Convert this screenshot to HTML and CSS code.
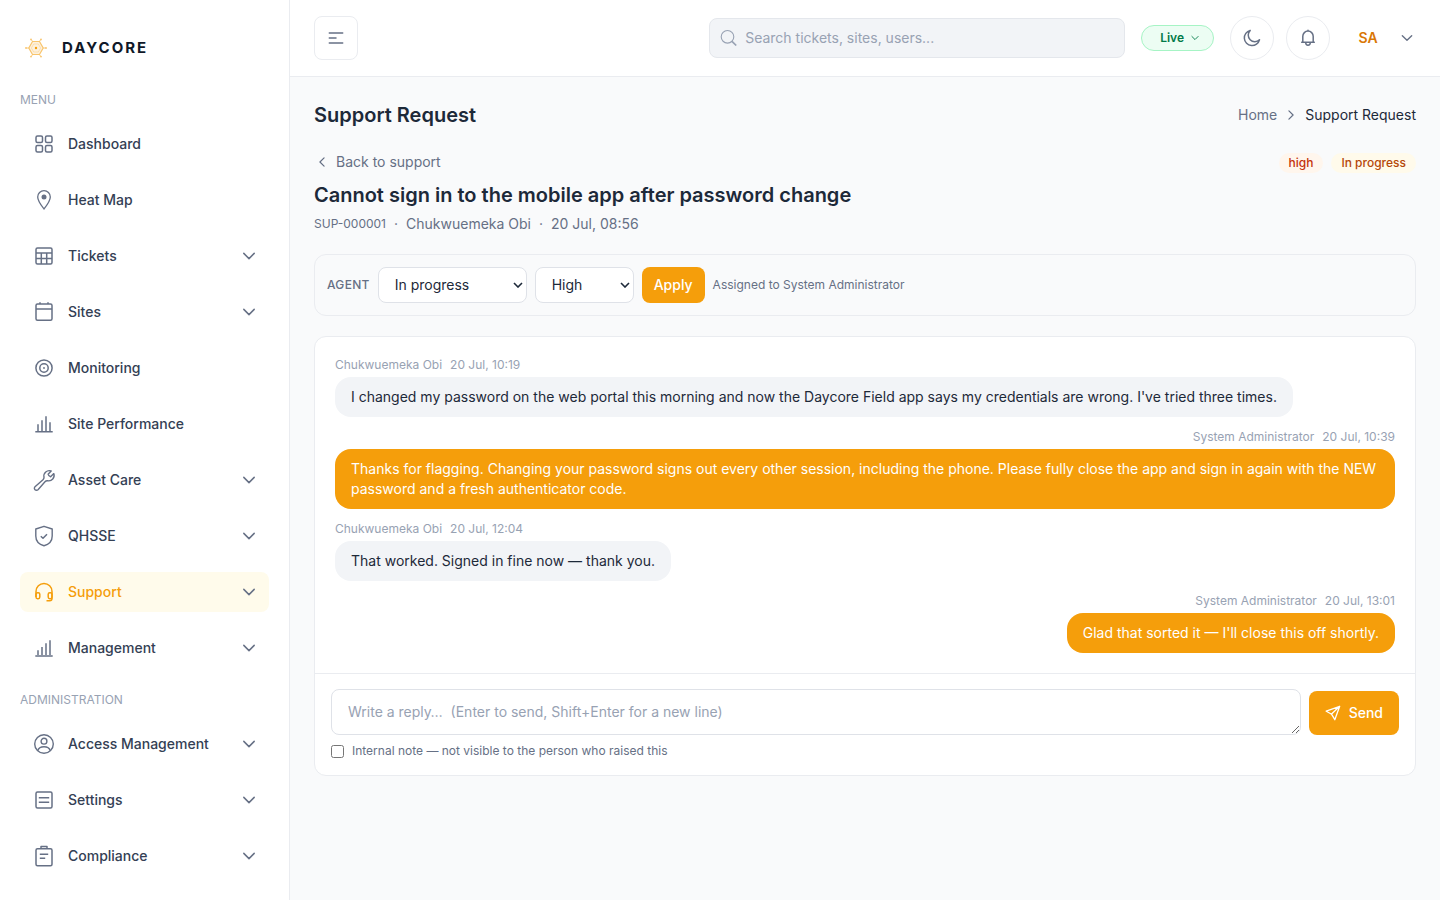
FILE: index.html
```html
<!DOCTYPE html>
<html lang="en">
<head>
    <meta charset="UTF-8">
    <meta name="viewport" content="width=device-width, initial-scale=1.0">
    <title>Support Request | Daycore</title>
    <link rel="stylesheet" href="styles.css">
</head>
<body>
    <svg class="sprite" aria-hidden="true">
        <symbol id="chevron" viewBox="0 0 20 20">
            <path d="M4.8 7.4 10 12.6l5.2-5.2" fill="none" stroke="currentColor" stroke-width="1.5" stroke-linecap="round" stroke-linejoin="round"/>
        </symbol>
    </svg>

    <div class="layout">
        <aside class="sidebar">
            <a class="logo" href="#">
                <svg class="logo-mark" viewBox="0 0 32 32" fill="none" stroke="#f59e0b">
                    <g opacity="0.6">
                        <path d="M12.500 9.500h7l3.700 6.500-3.700 6.500h-7L8.800 16z" stroke-width="1.200" fill="#fde8c8"/>
                        <path d="M13.700 12h4.600l2.300 4-2.300 4h-4.600l-2.300-4z" stroke-width="0.400"/>
                        <path d="M12.500 9.500 11.300 7.500M19.500 9.500l1.200-2M23.200 16h2.500M8.800 16H6.300M12.500 22.500l-1.200 2M19.500 22.500l1.200 2" stroke-width="0.900"/>
                        <g fill="#f59e0b" stroke="none">
                            <circle cx="11" cy="7.400" r="0.900"/>
                            <circle cx="21" cy="7.400" r="0.900"/>
                            <circle cx="26" cy="16" r="0.900"/>
                            <circle cx="6" cy="16" r="0.900"/>
                            <circle cx="11" cy="24.600" r="0.900"/>
                            <circle cx="21" cy="24.600" r="0.900"/>
                        </g>
                    </g>
                    <circle cx="16" cy="16" r="1.200" fill="#f59e0b" stroke="none"/>
                </svg>
                <span class="logo-text">DAYCORE</span>
            </a>

            <nav class="menu">
                <section class="menu-group">
                    <h2 class="menu-title">MENU</h2>
                    <ul class="menu-list">
                        <li><a class="menu-item" href="#">
                            <svg class="icon" viewBox="0 0 24 24"><rect x="4" y="4" width="6.500" height="6.500" rx="1.500"/><rect x="13.500" y="4" width="6.500" height="6.500" rx="1.500"/><rect x="4" y="13.500" width="6.500" height="6.500" rx="1.500"/><rect x="13.500" y="13.500" width="6.500" height="6.500" rx="1.500"/></svg>
                            <span>Dashboard</span>
                        </a></li>
                        <li><a class="menu-item" href="#">
                            <svg class="icon" viewBox="0 0 24 24"><path d="M12 21c-2.600-3.400-6.300-8-6.300-12A6.300 6.300 0 0 1 12 2.700 6.300 6.300 0 0 1 18.300 9c0 4-3.700 8.600-6.300 12z" stroke-width="1.300"/><circle cx="12" cy="9" r="2.500" fill="currentColor" stroke="none"/></svg>
                            <span>Heat Map</span>
                        </a></li>
                        <li><a class="menu-item" href="#">
                            <svg class="icon" viewBox="0 0 24 24"><rect x="4" y="4" width="16" height="16" rx="1.500"/><path d="M4 9h16M4 14.600h16M9.300 9v11M14.700 9v11"/></svg>
                            <span>Tickets</span>
                            <svg class="arrow"><use href="#chevron"/></svg>
                        </a></li>
                        <li><a class="menu-item" href="#">
                            <svg class="icon" viewBox="0 0 24 24"><rect x="4" y="4" width="16" height="16.300" rx="1.500"/><path d="M4 9h16M8 2.300V4M16 2.300V4"/></svg>
                            <span>Sites</span>
                            <svg class="arrow"><use href="#chevron"/></svg>
                        </a></li>
                        <li><a class="menu-item" href="#">
                            <svg class="icon" viewBox="0 0 24 24"><circle cx="12" cy="12" r="8.100"/><circle cx="12" cy="12" r="4.200"/><circle cx="12" cy="12" r="0.900" fill="currentColor" stroke="none"/></svg>
                            <span>Monitoring</span>
                        </a></li>
                        <li><a class="menu-item" href="#">
                            <svg class="icon" viewBox="0 0 24 24"><path d="M3.300 19.800h17.400M6 19v-6.700M10 19V8.200M14 19V4.200M18 19v-8.700"/></svg>
                            <span>Site Performance</span>
                        </a></li>
                        <li><a class="menu-item" href="#">
                            <svg class="icon" viewBox="0 0 24 24"><path d="M19.200 3A5.400 5.400 0 0 0 12 9.200c.1 1.100-.3 1.800-1 2.500l-8 7a2.100 2.100 0 1 0 3 3l7-8c.6-.7 1.400-1.100 2.500-1A5.400 5.400 0 0 0 21.800 5.600l-3.200 3.100a3.200 3.200 0 0 1-2.500-2.500z" stroke-width="1.400"/></svg>
                            <span>Asset Care</span>
                            <svg class="arrow"><use href="#chevron"/></svg>
                        </a></li>
                        <li><a class="menu-item" href="#">
                            <svg class="icon" viewBox="0 0 24 24"><path d="M12 2.300 20.200 5v7c0 5-3.700 8.500-8.200 9.700C7.500 20.500 3.800 17 3.800 12V5z" stroke-width="1.400"/><path d="m8.800 12.300 2.200 2 4-4"/></svg>
                            <span>QHSSE</span>
                            <svg class="arrow"><use href="#chevron"/></svg>
                        </a></li>
                        <li><a class="menu-item active" href="#" aria-current="page">
                            <svg class="icon" viewBox="0 0 24 24"><path d="M4 17v-5.500a8 8 0 0 1 16 0v7c0 1.500-1 2.300-2.300 2.300H14.500"/><rect x="4" y="12.700" width="3.800" height="6" rx="1.600"/><rect x="16.200" y="12.700" width="3.800" height="6" rx="1.600"/></svg>
                            <span>Support</span>
                            <svg class="arrow"><use href="#chevron"/></svg>
                        </a></li>
                        <li><a class="menu-item" href="#">
                            <svg class="icon" viewBox="0 0 24 24"><path d="M3.300 20h17.400M6 19v-4.700M10 19v-8M14 19V7.200M18 19V4.200"/></svg>
                            <span>Management</span>
                            <svg class="arrow"><use href="#chevron"/></svg>
                        </a></li>
                    </ul>
                </section>

                <section class="menu-group">
                    <h2 class="menu-title">ADMINISTRATION</h2>
                    <ul class="menu-list">
                        <li><a class="menu-item" href="#">
                            <svg class="icon" viewBox="0 0 24 24"><circle cx="12" cy="12" r="9.300" stroke-width="1.400"/><circle cx="12" cy="9.200" r="2.900" stroke-width="1.400"/><path d="M5.800 18.700c.6-2.500 2.700-4 6.200-4s5.600 1.500 6.200 4" stroke-width="1.400"/></svg>
                            <span>Access Management</span>
                            <svg class="arrow"><use href="#chevron"/></svg>
                        </a></li>
                        <li><a class="menu-item" href="#">
                            <svg class="icon" viewBox="0 0 24 24"><rect x="4" y="4" width="16" height="16" rx="1.500"/><path d="M6.800 9.700h10.400M6.800 14.300h10.400"/></svg>
                            <span>Settings</span>
                            <svg class="arrow"><use href="#chevron"/></svg>
                        </a></li>
                        <li><a class="menu-item" href="#">
                            <svg class="icon" viewBox="0 0 24 24"><rect x="4" y="4.700" width="16" height="17" rx="1.500"/><path d="M9 4.700V2.400h6v2.300M7.800 10.300h8.400M7.800 14.200h5.400"/></svg>
                            <span>Compliance</span>
                            <svg class="arrow"><use href="#chevron"/></svg>
                        </a></li>
                    </ul>
                </section>
            </nav>
        </aside>

        <div class="main">
            <header class="topbar">
                <button class="toggle" type="button" aria-label="Toggle sidebar">
                    <svg width="16" height="12" viewBox="0 0 16 12"><path d="M1.300 1h13.400M1.300 6h6.700M1.300 11h13.400" stroke="currentColor" stroke-width="1.500" stroke-linecap="round"/></svg>
                </button>

                <div class="topbar-right">
                    <label class="search">
                        <svg width="20" height="20" viewBox="0 0 20 20" fill="none" stroke="currentColor"><circle cx="8.500" cy="8.800" r="6.300" stroke-width="1.100"/><path d="m13 13.300 4.200 4.200" stroke-width="1.700"/></svg>
                        <input type="search" placeholder="Search tickets, sites, users..." aria-label="Search">
                    </label>
                    <button class="live" type="button">
                        Live
                        <svg class="live-arrow"><use href="#chevron"/></svg>
                    </button>
                    <div class="round-group">
                        <button class="round" type="button" aria-label="Dark mode">
                            <svg width="20" height="20" viewBox="0 0 20 20" fill="none" stroke="currentColor" stroke-width="1.500" stroke-linejoin="round"><path d="M8.200 2.400A7.700 7.700 0 1 0 17.500 11.800 6.300 6.300 0 0 1 8.200 2.400z"/></svg>
                        </button>
                        <button class="round" type="button" aria-label="Notifications">
                            <svg width="20" height="20" viewBox="0 0 20 20" fill="none" stroke="currentColor" stroke-width="1.500" stroke-linecap="round" stroke-linejoin="round"><path d="M3.700 14.200h12.600M4.800 14V8.300a5.200 5.200 0 0 1 10.400 0V14M10 2.300v.8M7.700 14.600c0 3.600 4.600 3.600 4.600 0"/></svg>
                        </button>
                    </div>
                    <button class="user" type="button" aria-label="Account menu">
                        <span class="avatar">SA</span>
                        <svg class="user-arrow"><use href="#chevron"/></svg>
                    </button>
                </div>
            </header>

            <main class="content">
                <div class="page-head">
                    <h1>Support Request</h1>
                    <nav class="breadcrumb" aria-label="Breadcrumb">
                        <a href="#">Home</a>
                        <svg class="crumb-arrow"><use href="#chevron"/></svg>
                        <span>Support Request</span>
                    </nav>
                </div>

                <div class="ticket-head">
                    <div>
                        <a class="back" href="#"><svg class="back-arrow"><use href="#chevron"/></svg>Back to support</a>
                        <h2>Cannot sign in to the mobile app after password change</h2>
                        <p class="meta"><span class="ref">SUP-000001</span><span>·</span><span>Chukwuemeka Obi</span><span>·</span><span>20 Jul, 08:56</span></p>
                    </div>
                    <div class="badges">
                        <span class="badge badge-high">high</span>
                        <span class="badge badge-progress">In progress</span>
                    </div>
                </div>

                <form class="agent-bar">
                    <span class="agent-label">AGENT</span>
                    <select class="select-status" aria-label="Status">
                        <option>Open</option>
                        <option selected>In progress</option>
                        <option>Resolved</option>
                        <option>Closed</option>
                    </select>
                    <select class="select-priority" aria-label="Priority">
                        <option>Low</option>
                        <option>Normal</option>
                        <option selected>High</option>
                        <option>Urgent</option>
                    </select>
                    <button class="btn btn-apply" type="button">Apply</button>
                    <span class="assigned">Assigned to System Administrator</span>
                </form>

                <section class="chat">
                    <div class="messages">
                        <article class="message">
                            <div class="message-meta"><span>Chukwuemeka Obi</span><time>20 Jul, 10:19</time></div>
                            <p class="bubble">I changed my password on the web portal this morning and now the Daycore Field app says my credentials are wrong. I've tried three times.</p>
                        </article>
                        <article class="message mine">
                            <div class="message-meta"><span>System Administrator</span><time>20 Jul, 10:39</time></div>
                            <p class="bubble">Thanks for flagging. Changing your password signs out every other session, including the phone. Please fully close the app and sign in again with the NEW password and a fresh authenticator code.</p>
                        </article>
                        <article class="message">
                            <div class="message-meta"><span>Chukwuemeka Obi</span><time>20 Jul, 12:04</time></div>
                            <p class="bubble">That worked. Signed in fine now — thank you.</p>
                        </article>
                        <article class="message mine">
                            <div class="message-meta"><span>System Administrator</span><time>20 Jul, 13:01</time></div>
                            <p class="bubble">Glad that sorted it — I'll close this off shortly.</p>
                        </article>
                    </div>

                    <form class="composer">
                        <div class="composer-row">
                            <textarea rows="1" aria-label="Reply" placeholder="Write a reply…  (Enter to send, Shift+Enter for a new line)"></textarea>
                            <button class="btn btn-send" type="button">
                                <svg width="16" height="16" viewBox="0 0 16 16" fill="none" stroke="currentColor" stroke-width="1.300" stroke-linejoin="round"><path d="M14.700 1.300 1.200 6.200l4.600 2.500 1 .9 3 5.100zM14.700 1.300 6.300 9.200"/></svg>
                                Send
                            </button>
                        </div>
                        <label class="internal">
                            <input type="checkbox">
                            Internal note — not visible to the person who raised this
                        </label>
                    </form>
                </section>
            </main>
        </div>
    </div>
</body>
</html>
```

FILE: styles.css
```css
* {
    box-sizing: border-box;
}
body {
    margin: 0;
    font-family: Inter, "Liberation Sans", sans-serif;
    font-size: 14px;
    line-height: 20px;
    color: #1d2939;
    background-color: #f9fafb;
}
h1, h2, p, ul {
    margin: 0;
    padding: 0;
}
ul {
    list-style: none;
}
a {
    color: inherit;
    text-decoration: none;
}
button, input, select, textarea {
    font: inherit;
    color: inherit;
}
button {
    padding: 0;
    cursor: pointer;
}
svg {
    flex-shrink: 0;
}
.sprite {
    display: none;
}
.layout {
    display: flex;
    height: 100vh;
    overflow: hidden;
}

/* Sidebar */
.sidebar {
    flex: 0 0 290px;
    padding: 0 20px;
    background-color: #fff;
    border-right: 1px solid #eaecf0;
    overflow: hidden;
}
.logo {
    display: flex;
    align-items: center;
    gap: 10px;
    padding: 32px 0 28px;
}
.logo-mark {
    width: 32px;
    height: 32px;
}
.logo-text {
    font-size: 15px;
    font-weight: 700;
    letter-spacing: 2px;
    color: #101828;
}
.menu {
    display: flex;
    flex-direction: column;
    gap: 24px;
}
.menu-title {
    margin-bottom: 16px;
    font-size: 12px;
    font-weight: 400;
    line-height: 16px;
    color: #98a2b3;
}
.menu-list {
    display: flex;
    flex-direction: column;
    gap: 16px;
}
.menu-item {
    display: flex;
    align-items: center;
    gap: 12px;
    padding: 8px 12px;
    border-radius: 8px;
    font-weight: 500;
    color: #344054;
}
.menu-item.active {
    background-color: #fffbeb;
    color: #f59e0b;
}
.icon {
    width: 24px;
    height: 24px;
    fill: none;
    stroke: currentColor;
    stroke-width: 1.5;
    stroke-linejoin: round;
    color: #667085;
}
.active .icon {
    color: #f59e0b;
}
.arrow {
    width: 20px;
    height: 20px;
    margin-left: auto;
    margin-right: -2px;
    color: #667085;
}

/* Top bar */
.main {
    flex: 1;
    min-width: 0;
    overflow: auto;
}
.topbar {
    display: flex;
    justify-content: space-between;
    padding: 16px 24px;
    background-color: #fff;
    border-bottom: 1px solid #eaecf0;
}
.toggle {
    display: flex;
    align-items: center;
    justify-content: center;
    width: 44px;
    height: 44px;
    border: 1px solid #eaecf0;
    border-radius: 8px;
    background: none;
    color: #667085;
}
.topbar-right {
    flex: 1;
    display: flex;
    align-items: center;
    justify-content: flex-end;
    gap: 16px;
}
.search {
    flex: 0 1 416px;
    display: flex;
    align-items: center;
    gap: 6px;
    height: 40px;
    padding: 0 9px;
    border: 1px solid #e4e7ec;
    border-radius: 8px;
    background-color: #f2f4f7;
    color: #98a2b3;
}
.search input {
    flex: 1;
    min-width: 0;
    padding: 0;
    border: none;
    outline: none;
    background: none;
    color: #1d2939;
}
::placeholder {
    color: #98a2b3;
    opacity: 1;
}
.live {
    display: flex;
    align-items: center;
    gap: 5px;
    padding: 4px 12px 4px 18px;
    border: 1px solid #a6f4c5;
    border-radius: 999px;
    background-color: #ecfdf3;
    font-size: 12px;
    font-weight: 600;
    line-height: 16px;
    color: #027a48;
}
.live-arrow {
    width: 12px;
    height: 12px;
}
.live-arrow, .crumb-arrow, .back-arrow {
    stroke-width: 2;
}
.round-group {
    display: flex;
    gap: 12px;
}
.round {
    display: flex;
    align-items: center;
    justify-content: center;
    width: 44px;
    height: 44px;
    border: 1px solid #eaecf0;
    border-radius: 50%;
    background: none;
    color: #667085;
}
.user {
    display: flex;
    align-items: center;
    gap: 8px;
    border: none;
    background: none;
    color: #667085;
}
.avatar {
    width: 44px;
    font-weight: 600;
    color: #d97706;
}
.user-arrow {
    width: 18px;
    height: 18px;
}

/* Page heading */
.content {
    padding: 24px;
}
.page-head {
    display: flex;
    align-items: center;
    justify-content: space-between;
    margin-bottom: 24px;
}
h1, h2 {
    font-size: 20px;
    font-weight: 600;
    line-height: 28px;
}
.breadcrumb {
    display: flex;
    align-items: center;
    gap: 6px;
}
.breadcrumb a {
    color: #667085;
}
.crumb-arrow {
    width: 16px;
    height: 16px;
    color: #667085;
    transform: rotate(-90deg);
}
.ticket-head {
    display: flex;
    align-items: flex-start;
    justify-content: space-between;
    margin-bottom: 20px;
}
.ticket-head h2 {
    margin: 10px 0 5px;
}
.back {
    display: flex;
    align-items: center;
    gap: 6px;
    line-height: 18px;
    color: #667085;
}
.back-arrow {
    width: 16px;
    height: 16px;
    transform: rotate(90deg);
}
.meta {
    display: flex;
    align-items: center;
    gap: 8px;
    color: #667085;
}
.ref {
    font-size: 12px;
}
.badges {
    display: flex;
    gap: 8px;
}
.badge {
    padding: 2px 10px;
    border-radius: 999px;
    font-size: 12px;
    font-weight: 500;
    line-height: 16px;
}
.badge-high {
    background-color: #fff6ed;
    color: #c4320a;
}
.badge-progress {
    background-color: #fffaeb;
    color: #b54708;
}

/* Agent controls */
.agent-bar {
    display: flex;
    align-items: center;
    gap: 8px;
    margin-bottom: 20px;
    padding: 12px;
    border: 1px solid #eaecf0;
    border-radius: 12px;
    font-size: 12px;
    color: #667085;
}
.agent-label {
    font-weight: 500;
    letter-spacing: 0.025em;
}
select {
    appearance: none;
    height: 36px;
    padding: 0 16px;
    border: 1px solid #dfe2e8;
    border-radius: 8px;
    background: #fff url("data:image/svg+xml,%3Csvg xmlns='http://www.w3.org/2000/svg' width='10' height='6' fill='none' stroke='%231d2939' stroke-width='1.6'%3E%3Cpath d='M1 1l4 4 4-4'/%3E%3C/svg%3E") no-repeat right 3px center;
    font-size: 14px;
    color: #1d2939;
}
.select-status {
    width: 149px;
}
.select-priority {
    width: 99px;
}
.btn {
    display: flex;
    align-items: center;
    justify-content: center;
    gap: 8px;
    border: none;
    border-radius: 8px;
    background-color: #f59e0b;
    font-size: 14px;
    font-weight: 500;
    color: #fff;
}
.btn-apply {
    height: 36px;
    padding: 0 12px;
}
.btn-send {
    height: 44px;
    padding: 0 16px;
}

/* Conversation */
.chat {
    border: 1px solid #eaecf0;
    border-radius: 12px;
    background-color: #fff;
}
.messages {
    display: flex;
    flex-direction: column;
    gap: 12px;
    padding: 20px;
}
.message {
    display: flex;
    flex-direction: column;
    align-items: flex-start;
    gap: 4px;
}
.message.mine {
    align-items: flex-end;
}
.message-meta {
    display: flex;
    gap: 8px;
    font-size: 12px;
    line-height: 16px;
    color: #98a2b3;
}
.bubble {
    padding: 10px 16px;
    border-radius: 16px;
    background-color: #f2f4f7;
}
.mine .bubble {
    background-color: #f59e0b;
    color: #fff;
}
.composer {
    padding: 15px 16px 16px;
    border-top: 1px solid #eaecf0;
}
.composer-row {
    display: flex;
    align-items: flex-end;
    gap: 8px;
    margin-bottom: 8px;
}
textarea {
    flex: 1;
    min-width: 0;
    height: 46px;
    padding: 12px 16px;
    border: 1px solid #dfe2e8;
    border-radius: 8px;
    background-color: #fff;
    resize: vertical;
}
.internal {
    display: flex;
    align-items: center;
    gap: 8px;
    font-size: 12px;
    line-height: 16px;
    color: #667085;
}
.internal input {
    width: 13px;
    height: 13px;
    margin: 0;
}
```
